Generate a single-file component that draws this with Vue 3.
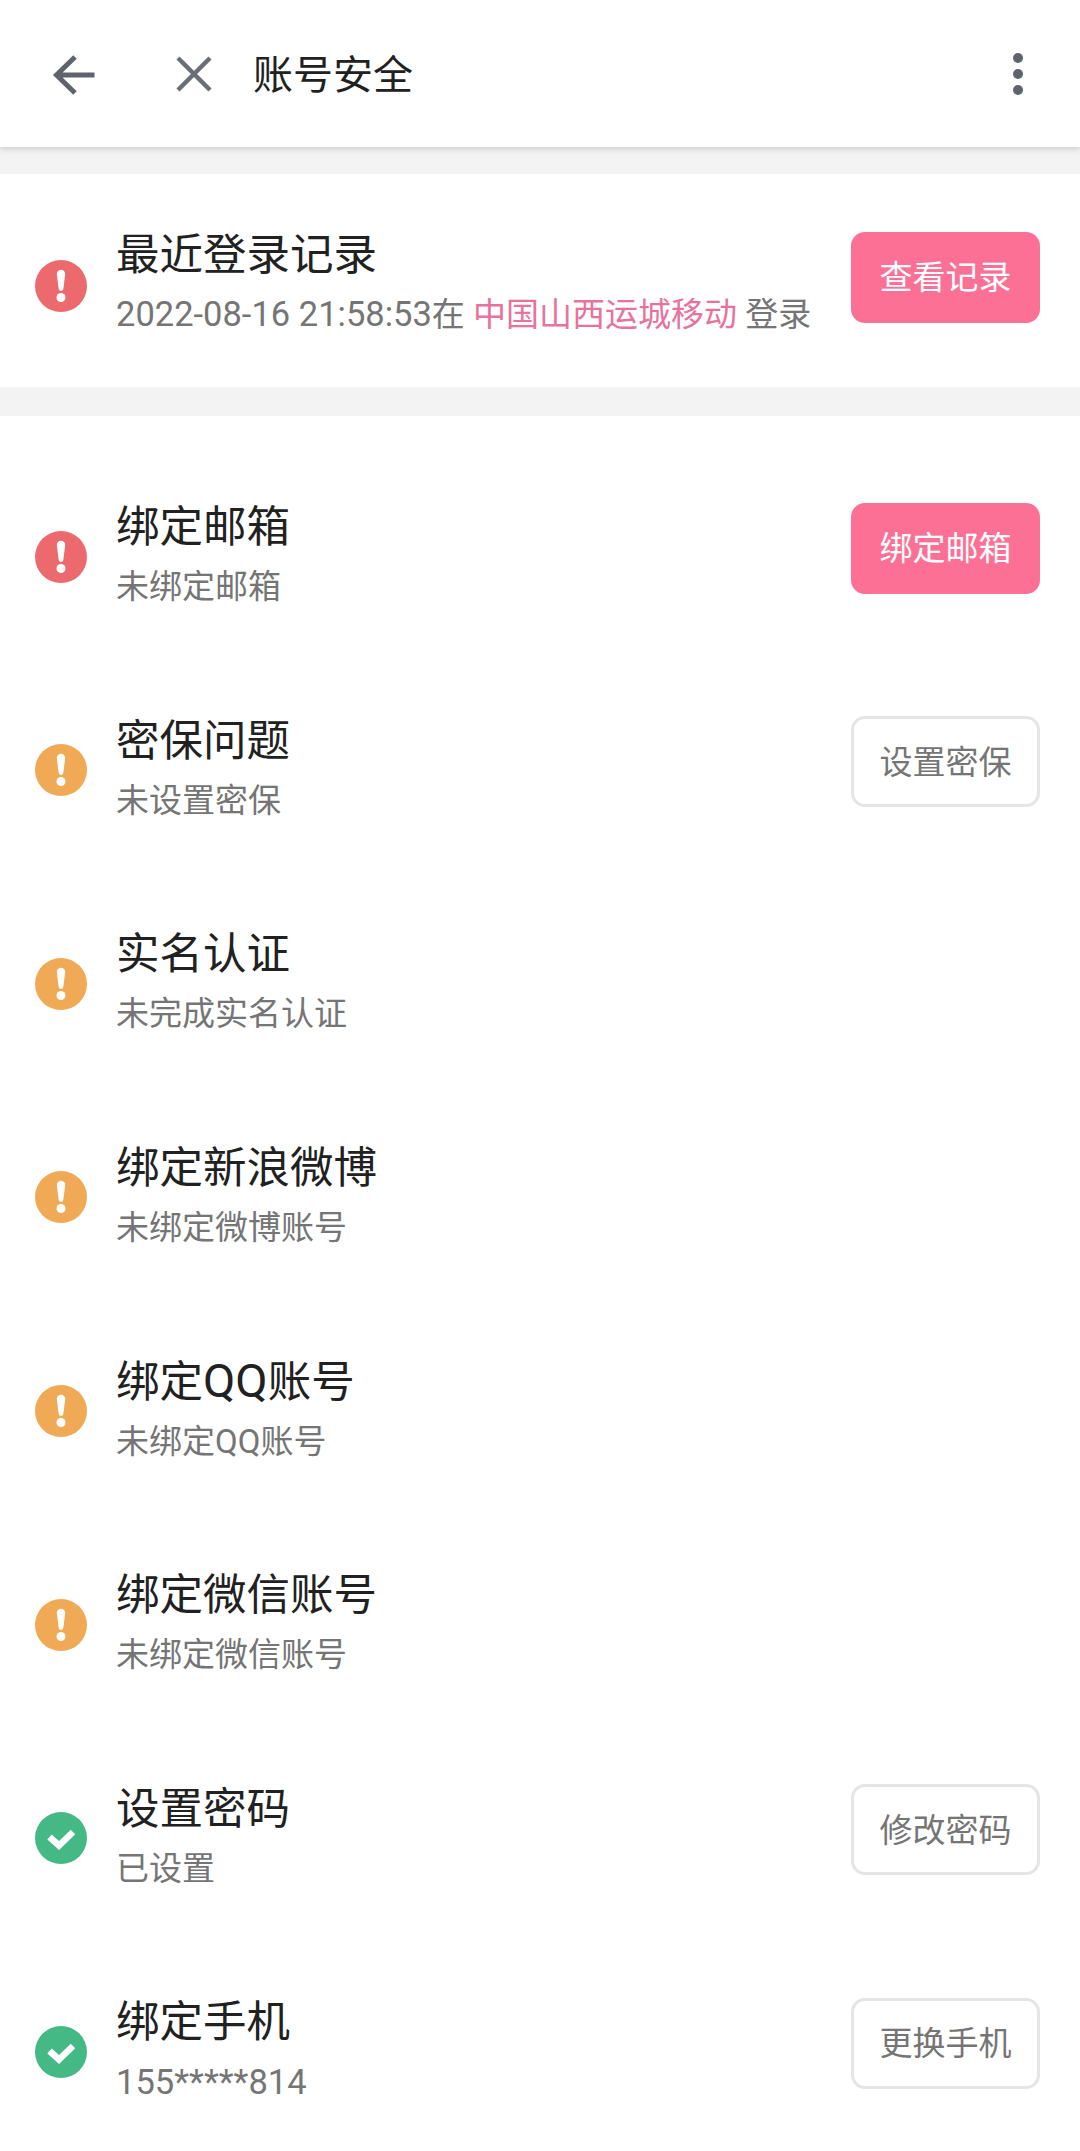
<script setup>
const rows = [
  { title: '绑定邮箱', sub: '未绑定邮箱', status: 'danger', action: '绑定邮箱', primary: true },
  { title: '密保问题', sub: '未设置密保', status: 'warn', action: '设置密保' },
  { title: '实名认证', sub: '未完成实名认证', status: 'warn' },
  { title: '绑定新浪微博', sub: '未绑定微博账号', status: 'warn' },
  { title: '绑定', latin: 'QQ', rest: '账号', sub: '未绑定QQ账号', status: 'warn' },
  { title: '绑定微信账号', sub: '未绑定微信账号', status: 'warn' },
  { title: '设置密码', sub: '已设置', status: 'ok', action: '修改密码' },
  { title: '绑定手机', num: '155*****814', status: 'ok', action: '更换手机' }
]
</script>

<template>
  <div class="page">
    <header class="bar">
      <svg class="back" width="48" height="48" viewBox="0 0 48 48" fill="none" stroke="#5f636c" stroke-width="5">
        <path d="M44.5 25H6M25 7L6.5 25L25 43" />
      </svg>
      <svg class="close" width="38" height="38" viewBox="0 0 38 38" fill="none" stroke="#6a6e77" stroke-width="4.5">
        <path d="M3 3L35 35M35 3L3 35" />
      </svg>
      <h1 class="heading">账号安全</h1>
      <svg class="more" width="12" height="44" viewBox="0 0 12 44" fill="#5f636c">
        <circle cx="6" cy="6" r="5" /><circle cx="6" cy="22" r="5" /><circle cx="6" cy="38" r="5" />
      </svg>
    </header>

    <section class="card">
      <div class="row login">
        <svg class="status" width="52" height="52" viewBox="0 0 52 52">
          <circle cx="26" cy="26" r="26" fill="#ec6a6e" />
          <path d="M21.8 14a4.2 4.2 0 0 1 8.4 0L28.4 28.5a2.4 2.4 0 0 1-4.8 0Z" fill="#fff" />
          <circle cx="26" cy="37.5" r="4.5" fill="#fff" />
        </svg>
        <div class="text">
          <div class="title">最近登录记录</div>
          <div class="sub"><span class="num">2022-08-16 21:58:53</span>在 <span class="place">中国山西运城移动</span> 登录</div>
        </div>
        <button class="btn primary">查看记录</button>
      </div>
    </section>

    <section class="list">
      <div v-for="r in rows" :key="r.title + r.sub" class="row">
        <svg class="status" width="52" height="52" viewBox="0 0 52 52">
          <template v-if="r.status === 'ok'">
            <circle cx="26" cy="26" r="26" fill="#45b985" />
            <path d="M14.5 25L24 33.5L38 20" fill="none" stroke="#fff" stroke-width="6.5" />
          </template>
          <template v-else>
            <circle cx="26" cy="26" r="26" :fill="r.status === 'danger' ? '#ec6a6e' : '#f0a955'" />
            <path d="M21.8 14a4.2 4.2 0 0 1 8.4 0L28.4 28.5a2.4 2.4 0 0 1-4.8 0Z" fill="#fff" />
            <circle cx="26" cy="37.5" r="4.5" fill="#fff" />
          </template>
        </svg>
        <div class="text">
          <div class="title">{{ r.title }}<span v-if="r.latin" class="latin">{{ r.latin }}</span>{{ r.rest }}</div>
          <div class="sub"><span v-if="r.num" class="num">{{ r.num }}</span>{{ r.sub }}</div>
        </div>
        <button v-if="r.action" class="btn" :class="{ primary: r.primary }">{{ r.action }}</button>
      </div>
    </section>
  </div>
</template>

<style>
html, body { margin: 0; background: #fff; }
</style>

<style scoped>
.page {
  width: 1080px;
  height: 2151px;
  overflow: hidden;
  background: #fff;
  font-family: Roboto, "Noto Sans CJK SC", sans-serif;
}
.bar {
  position: relative;
  z-index: 1;
  height: 147px;
  display: flex;
  align-items: center;
  background: #fff;
  box-shadow: 0 2px 6px rgba(0, 0, 0, 0.16);
}
.back { margin: 0 0 0 50px; flex: none; }
.close { margin: 0 0 0 77px; flex: none; }
.heading {
  margin: 0 0 4px 40px;
  flex: 1;
  font-size: 40px;
  font-weight: 400;
  color: #212121;
}
.more { margin: 0 56px 0 0; flex: none; }
.card {
  height: 213px;
  border-top: 27px solid #f3f3f3;
  border-bottom: 29px solid #f3f3f3;
}
.list { padding-top: 34px; }
.row {
  height: 213.57px;
  display: flex;
  align-items: center;
  padding: 0 40px 0 35px;
  box-sizing: border-box;
}
.login { height: 213px; padding-top: 10px; }
.status { flex: none; }
.text { flex: 1; margin-left: 29px; margin-top: -1px; min-width: 0; }
.login .text { margin-top: -4px; }
.login .sub { margin-top: -1px; }
.title {
  font-size: 43.5px;
  line-height: 62px;
  color: #212121;
}
.latin { font-size: 47px; line-height: 40px; }
.sub {
  font-size: 33px;
  line-height: 56px;
  color: #757575;
  white-space: nowrap;
}
.num { font-size: 34.5px; }
.place { color: #e8729c; }
.btn {
  flex: none;
  width: 189px;
  height: 91px;
  margin: -17px 0 0 0;
  padding: 0 0 4px;
  box-sizing: border-box;
  border: 3px solid #e5e5e5;
  border-radius: 14px;
  background: #fff;
  color: #757575;
  font: 33px Roboto, "Noto Sans CJK SC", sans-serif;
}
.btn.primary { background: #fd7096; border-color: #fd7096; color: #fff; }
</style>
